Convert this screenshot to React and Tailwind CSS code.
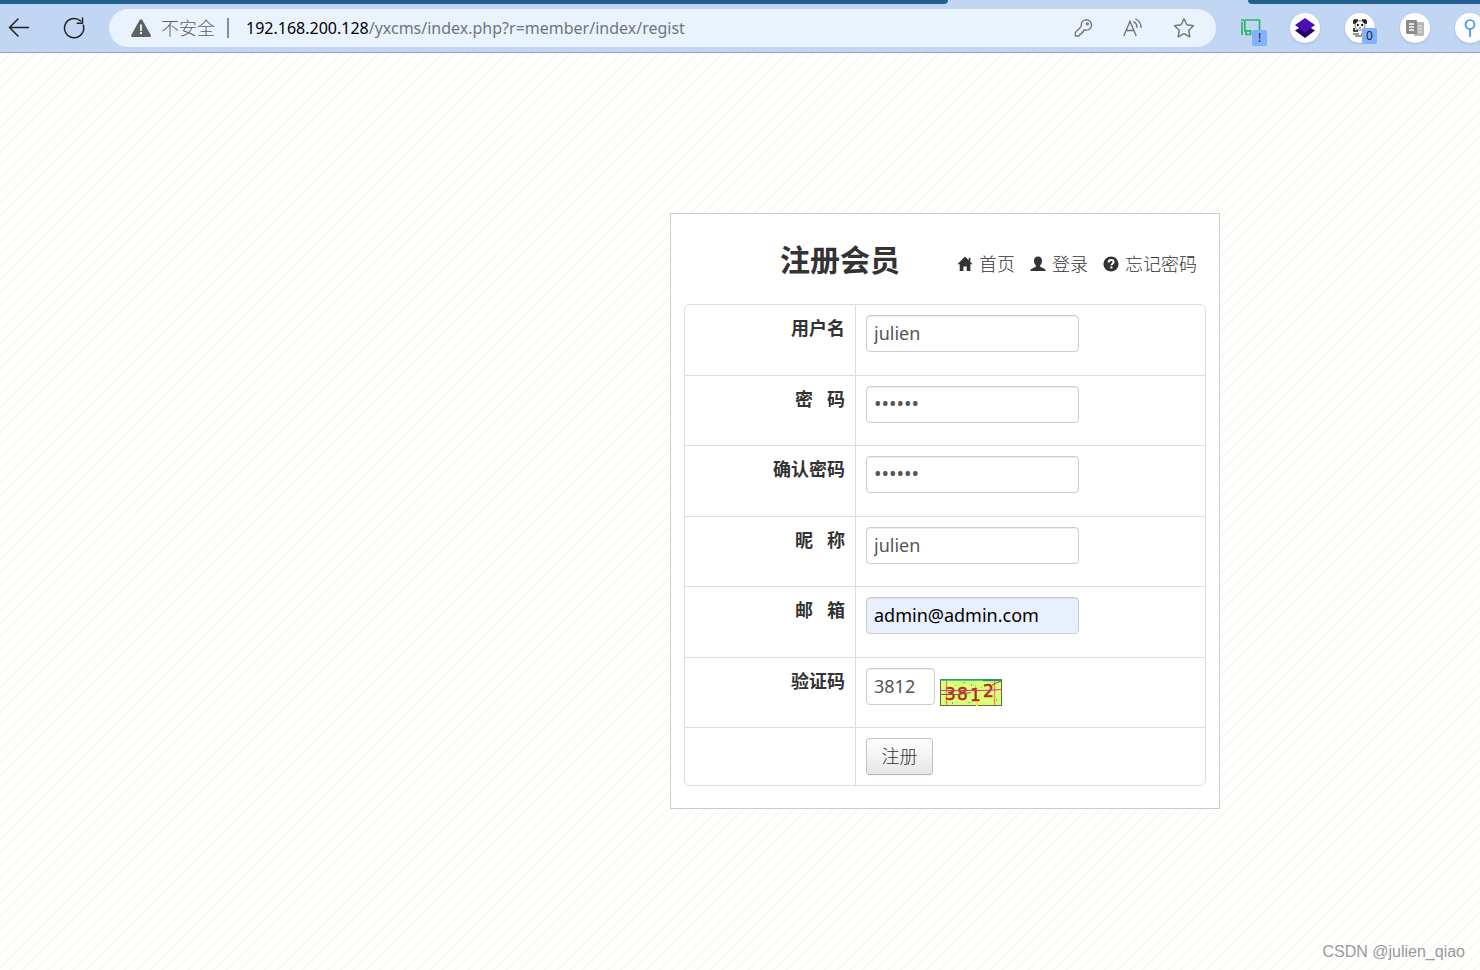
import React from "react";

const cjk = "font-['Noto_Sans','Noto_Sans_CJK_SC',sans-serif]";

const fields = [
  { id: "username", label: "用户名", type: "text", value: "julien" },
  { id: "password", label: "密   码", type: "password", value: "123456" },
  { id: "confirm", label: "确认密码", type: "password", value: "123456" },
  { id: "nickname", label: "昵   称", type: "text", value: "julien" },
  { id: "email", label: "邮   箱", type: "text", value: "admin@admin.com", filled: true },
];

const inputBase =
  "block h-[37px] rounded border border-[#ccc] px-[7px] pb-[2px] shadow-[inset_0_1px_1px_rgba(0,0,0,0.08)] outline-none";

function ReadAloudIcon() {
  return (
    <svg viewBox="0 0 22 22" className="size-[22px]" fill="none" stroke="#707478" strokeWidth="1.4" strokeLinecap="round">
      <path d="M2 18.500 8 4.200 14 18.500M4.200 13.500h7.700M11.800 4.800c2 1 3.100 2.900 3.200 5.400M13.800 2c3.300 1.700 5 4.700 5.300 8.400" />
    </svg>
  );
}

function Toolbar() {
  return (
    <header className="border-b border-[#8fa5c4] bg-[#c1d6f3]">
      <div className="flex h-1 justify-between">
        <div className="w-[948px] rounded-br bg-[#23618f]" />
        <div className="w-[232px] rounded-bl bg-[#23618f]" />
      </div>
      <div className="flex h-12 items-center overflow-hidden">
        <button type="button" aria-label="返回" className="ml-2 size-[22px] shrink-0">
          <svg viewBox="0 0 22 22" className="size-[22px]" fill="none" stroke="#222" strokeWidth="1.5" strokeLinecap="round" strokeLinejoin="round">
            <path d="M20.500 10.500H1.500M10 2 1.500 10.500 10 19" />
          </svg>
        </button>
        <button type="button" aria-label="刷新" className="ml-8 size-6 shrink-0">
          <svg viewBox="0 0 24 24" className="size-6" fill="none" stroke="#222" strokeWidth="1.5" strokeLinecap="round" strokeLinejoin="round">
            <path d="M21.300 9.300A9.600 9.600 0 1 1 18.600 5M20.500 2v5.200H15.300" />
          </svg>
        </button>
        <div className="ml-[23px] flex h-[38px] min-w-0 flex-1 items-center rounded-full bg-[#eaf3fd] pr-5 pl-[22px]">
          <svg viewBox="0 0 20 18" className="h-[18px] w-5 shrink-0">
            <path d="M10 .3c.6 0 1 .3 1.300.8l8.400 14.800c.5 1 0 2-1.200 2h-17c-1.200 0-1.700-1-1.200-2L8.700 1.100C9 .6 9.400.3 10 .3z" fill="#5f6265" />
            <path d="M10 6v5.200" stroke="#fff" strokeWidth="1.700" strokeLinecap="round" />
            <circle cx="10" cy="14.200" r="1.100" fill="#fff" />
          </svg>
          <span className="ml-[10px] text-[18px] font-light whitespace-nowrap text-[#5c6065]">不安全</span>
          <span className="ml-3 h-5 w-[2px] shrink-0 bg-[#898e94]" />
          <span className="ml-[17px] text-[16px] whitespace-nowrap text-black">
            192.168.200.128<span className="text-[#70757b]">/yxcms/index.php?r=member/index/regist</span>
          </span>
          <div className="ml-auto flex items-center gap-7">
            <button type="button" aria-label="密码">
              <svg viewBox="0 0 22 22" className="size-[22px]" fill="none" stroke="#707478" strokeWidth="1.300" strokeLinejoin="round">
                <path d="M9.300 9.400A5.200 5.200 0 1 1 13 13l-1.500.2v1.900H9.700v1.800H7.900v1.200L6.600 19H3.300v-3.500z" />
                <circle cx="15.300" cy="6.800" r="1" />
              </svg>
            </button>
            <button type="button" aria-label="朗读"><ReadAloudIcon /></button>
            <button type="button" aria-label="收藏">
              <svg viewBox="0 0 24 24" className="size-6" fill="none" stroke="#707478" strokeWidth="1.400" strokeLinejoin="round">
                <path d="m12 2.800 2.900 6 6.600.9-4.800 4.600 1.200 6.600-5.900-3.200-5.900 3.200 1.200-6.600L2.500 9.700l6.600-.9z" />
              </svg>
            </button>
          </div>
        </div>
        <div className="-mr-[5px] ml-6 flex shrink-0 items-center gap-6">
          <div className="relative size-[26px]">
            <svg viewBox="0 0 26 26" className="size-[26px]" fill="none" stroke="#27b56c" strokeWidth="1.700">
              <path d="M4.800 5H19.500v11.500M1 5h3M2 7v13M4.800 5v10.800H10.500v3.700H6v-3.500" />
            </svg>
            <span className="absolute top-[15px] left-3 flex h-4 w-[15px] items-center justify-center rounded-xs bg-[#80b3fc] text-[12px] text-[#222]">!</span>
          </div>
          <div className="flex size-[30px] items-center justify-center rounded-full bg-white shadow">
            <svg viewBox="0 0 22 22" className="size-[22px]">
              <path d="M11 7.500 21 13.500l-10 7.500L1 13.500z" fill="#240063" />
              <path d="M11 1 21 8l-10 7.500L1 8z" fill="#4b0db5" />
            </svg>
          </div>
          <div className="relative ml-px flex size-[30px] items-center justify-center rounded-full bg-white shadow">
            <svg viewBox="0 0 20 20" className="size-5">
              <path d="M4 2h4M12 2h4M4 2v4M16 2v4M4 10v3h4M12 13h4v-3" fill="none" stroke="#111" strokeWidth="1.600" />
              <circle cx="6" cy="4" r="1.600" /><circle cx="14" cy="4" r="1.600" />
              <ellipse cx="10" cy="7.500" rx="5" ry="4.800" fill="#fff" stroke="#222" strokeWidth=".6" />
              <ellipse cx="7.800" cy="7" rx="1" ry="1.200" /><ellipse cx="12.200" cy="7" rx="1" ry="1.200" />
              <path d="M9 10h2M3 16h6M11 16h5M5 18h10" stroke="#333" strokeWidth="1" />
            </svg>
            <span className="absolute top-[15px] left-[17px] flex h-4 w-[15px] items-center justify-center rounded-xs bg-[#80b3fc] text-[12px] text-[#222]">0</span>
          </div>
          <div className="ml-px flex size-[30px] items-center justify-center rounded-full bg-white shadow">
            <svg viewBox="0 0 20 20" className="size-5">
              <rect x="9" y="4" width="10" height="14" rx="1" fill="#b8b8b8" />
              <rect x="1" y="2" width="11" height="14" rx="1" fill="#8b8b8b" />
              <path d="M4 6h5M4 9h5M4 12h5" stroke="#fff" strokeWidth="1.400" />
              <path d="M13 8h4M13 11h4M13 14h4" stroke="#e8e8e8" strokeWidth="1.200" />
            </svg>
          </div>
          <div className="ml-px flex size-[30px] items-center justify-center rounded-full bg-white shadow">
            <svg viewBox="0 0 12 18" className="h-[18px] w-3" fill="none" stroke="#3c94f5" strokeWidth="1.700">
              <circle cx="6" cy="5.500" r="4.500" />
              <path d="M6 10v8" />
            </svg>
          </div>
        </div>
      </div>
    </header>
  );
}

function HomeIcon() {
  return (
    <svg viewBox="0 0 16 16" className="size-4" fill="#333">
      <path d="M8 .5 15.600 8.200H13.400V15H9.700v-4.600H6.400V15H2.700V8.200H.4z" />
      <path d="M11.700 1.800h1.700v4h-1.700z" />
    </svg>
  );
}

function UserIcon() {
  return (
    <svg viewBox="0 0 16 16" className="size-4" fill="#333">
      <path d="M8 .5c2.600 0 4 1.700 4 4.200 0 2-.7 3.700-1.900 4.700 0 1 .2 1.500 1.100 1.900l3.200 1.400c.8.4 1.200 1 1.200 2.300H.4c0-1.300.4-1.900 1.200-2.300l3.200-1.400c.9-.4 1.100-.9 1.100-1.900C4.700 8.400 4 6.700 4 4.700 4 2.200 5.400.5 8 .5z" />
    </svg>
  );
}

function HelpIcon() {
  return (
    <svg viewBox="0 0 16 16" className="size-4">
      <circle cx="8" cy="8" r="7.600" fill="#333" />
      <path d="M5.600 6.500C5.600 4.700 6.700 4 8.100 4c1.500 0 2.500.8 2.500 2 0 1.700-2.200 1.600-2.200 3.300" fill="none" stroke="#fff" strokeWidth="1.900" />
      <path d="M7.300 10.500h2.100v2H7.300z" fill="#fff" />
    </svg>
  );
}

function Captcha() {
  return (
    <svg viewBox="0 0 62 27" className="h-[27px] w-[62px]" role="img" aria-label="3812">
      <rect x=".5" y=".5" width="61" height="26" fill="#dcff7a" stroke="#5e6b45" />
      <path d="M0 1h62" stroke="#23b184" strokeWidth="1.500" />
      <path d="M43 1h19" stroke="#2c9475" strokeWidth="2.500" />
      <path d="M6.500 2v24M54.500 2v24" stroke="#f28a62" strokeWidth="1.500" />
      <g className="font-['DejaVu_Sans',sans-serif] text-[17px]" fill="#b32a1c" stroke="#b32a1c" strokeWidth=".5">
        <text x="5" y="21">3</text>
        <text x="17" y="21">8</text>
        <text x="30" y="22">1</text>
        <text x="43" y="18">2</text>
      </g>
      <path d="M1 11.500h43l18-1" stroke="#e3348c" strokeWidth="1.200" fill="none" />
      <path d="M1 15.500h17M18 15.500l13-2M52 6l9-4" stroke="#8b5a35" />
      <path d="M37 23v4" stroke="#ffe327" strokeWidth="2" />
      <path d="M23 3h2v1h-2zM31 5h1v2h-1zM12 23h1v2h-1zM28 23h2v1h-2zM56 20h1v2h-1zM41 8h1v1h-1zM35 7h1v1h-1zM15 6h1v1h-1z" fill="#41c98b" />
    </svg>
  );
}

function FieldRow({ id, label, odd, children }) {
  return (
    <tr className={odd ? "h-[71px]" : "h-[70px]"}>
      <th scope="row" className="w-[171px] border-r border-b border-[#ddd] px-[10px] pt-[10px] text-right align-top text-[18px] leading-[26px] font-bold">
        <label htmlFor={id} className="whitespace-pre">{label}</label>
      </th>
      <td className="border-b border-[#ddd] px-[10px] pt-[10px] align-top">{children}</td>
    </tr>
  );
}

export default function App() {
  return (
    <div className={`relative flex min-h-screen flex-col overflow-hidden text-[#333] ${cjk}`}>
      <Toolbar />
      <main className="flex-1 bg-[#fffffe] bg-[repeating-linear-gradient(135deg,#fffffe_0px,#fffffe_6px,#f8f8f5_7px,#f8f8f5_8px,#fffffe_9px)] pt-40 pl-[670px]">
        <form className="w-[550px] border border-[#ccc] bg-white px-[13px] pb-[22px]" onSubmit={(e) => e.preventDefault()}>
          <div className="flex h-[90px] items-center pt-[2px]">
            <h1 className="ml-24 text-[30px] leading-10 font-bold">注册会员</h1>
            <nav className="ml-auto flex gap-[15px] pt-2 pr-[9px] text-[18px] font-light">
              <a href="#home" className="flex items-center gap-[6px] whitespace-nowrap"><HomeIcon />首页</a>
              <a href="#login" className="flex items-center gap-[6px] whitespace-nowrap"><UserIcon />登录</a>
              <a href="#forgot" className="flex items-center gap-[6px] whitespace-nowrap"><HelpIcon />忘记密码</a>
            </nav>
          </div>
          <table className="w-full border-separate border-spacing-0 rounded-md border border-[#ddd]">
            <tbody>
              {fields.map((f, i) => (
                <FieldRow key={f.id} id={f.id} label={f.label} odd={i % 2 === 0}>
                  <input
                    id={f.id}
                    type={f.type}
                    defaultValue={f.value}
                    className={`${inputBase} w-[213px] ${f.type === "password" ? "text-[20px]" : "text-[18px]"} ${f.filled ? "bg-[#e8f0fe] text-black" : "bg-white text-[#555]"}`}
                  />
                </FieldRow>
              ))}
              <FieldRow id="captcha" label="验证码">
                <div className="flex h-[38px] items-start gap-[5px]">
                  <input id="captcha" type="text" defaultValue="3812" className={`${inputBase} w-[69px] bg-white text-[18px] text-[#555]`} />
                  <div className="self-end"><Captcha /></div>
                </div>
              </FieldRow>
              <tr className="h-[57px]">
                <td className="border-r border-[#ddd]" />
                <td className="px-[10px] pt-[10px] align-top">
                  <button
                    type="submit"
                    className="block h-[37px] w-[67px] rounded border border-[#c4c4c4] border-b-[#b3b3b3] bg-linear-to-b from-white to-[#e6e6e6] pb-px text-[18px] font-light shadow-xs"
                  >
                    注册
                  </button>
                </td>
              </tr>
            </tbody>
          </table>
        </form>
      </main>
      <p className="absolute right-[15px] bottom-[6px] font-['Liberation_Sans',sans-serif] text-[16px] text-[#999]">CSDN @julien_qiao</p>
    </div>
  );
}
